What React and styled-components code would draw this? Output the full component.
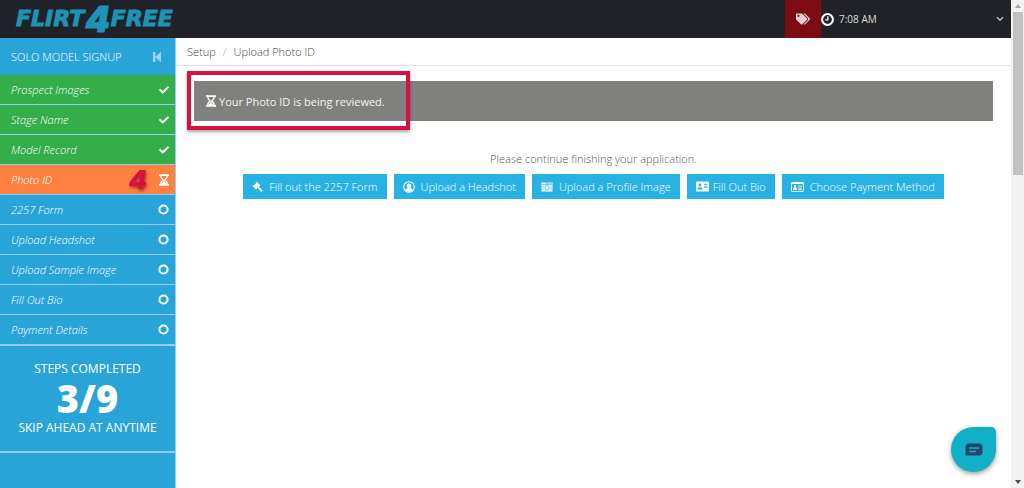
import React from "react";
import styled, { createGlobalStyle } from "styled-components";
import { FaCheck, FaTags, FaAddressCard } from "react-icons/fa";

const colors = {
  header: "#212227",
  blue: "#29a4d9",
  green: "#34ad4b",
  orange: "#ff8142",
  button: "#27b2e3",
  red: "#d8103f",
  darkRed: "#7c0c11",
  logo: "#1d93b6",
  line: "#8fd0ee",
};

const GlobalStyle = createGlobalStyle`
  * {
    box-sizing: border-box;
  }

  body {
    margin: 0;
    background: #fff;
    font-family: "Open Sans", sans-serif;
    font-size: 11px;
    color: #777;
  }

  a {
    color: inherit;
    text-decoration: none;
  }

  button {
    font: inherit;
    border: 0;
    cursor: pointer;
  }
`;

const Screen = styled.div`
  display: flex;
  height: 100vh;
  overflow: hidden;
`;

const Page = styled.div`
  flex: 1;
  min-width: 0;
  display: flex;
  flex-direction: column;
`;

const Header = styled.header`
  display: flex;
  align-items: stretch;
  justify-content: space-between;
  height: 38px;
  flex-shrink: 0;
  background: ${colors.header};
  color: #dcdcdc;
`;

const Logo = styled.a`
  display: flex;
  align-items: center;
  gap: 1px;
  padding-left: 16px;
  font-family: "DejaVu Sans", sans-serif;
  font-size: 22px;
  font-style: italic;
  font-weight: 700;
  line-height: 36px;
  -webkit-text-stroke: 1px ${colors.logo};

  && {
    color: ${colors.logo};
  }

  b {
    font-family: Inter, sans-serif;
    font-size: 35px;
    font-weight: 900;
  }
`;

const HeaderTools = styled.div`
  display: flex;
  width: 226px;
`;

const TagButton = styled.button`
  display: flex;
  align-items: center;
  justify-content: center;
  width: 36px;
  padding: 0;
  background: ${colors.darkRed};
  color: #e3cfd2;
`;

const Clock = styled.button`
  flex: 1;
  display: flex;
  align-items: center;
  gap: 5px;
  padding: 0 7px 0 0;
  background: none;
  color: #dcdcdc;
  font-size: 10px;

  svg:last-child {
    margin-left: auto;
  }
`;

const Body = styled.div`
  flex: 1;
  display: flex;
`;

const Sidebar = styled.nav`
  width: 176px;
  flex-shrink: 0;
  background: ${colors.blue};
  border-right: 1px solid ${colors.line};
  color: #fff;
`;

const SidebarTitle = styled.div`
  display: flex;
  align-items: center;
  justify-content: space-between;
  height: 37px;
  padding: 0 13px 0 11px;
  font-weight: 300;

  button {
    display: flex;
    padding: 0;
    background: none;
    color: #9bd6f0;
  }
`;

const StepList = styled.ul`
  margin: 0;
  padding: 0;
  list-style: none;
  border-bottom: 1px solid ${colors.line};
`;

const Step = styled.li`
  background: ${({ $color }) => $color};
  border-bottom: 1px solid ${colors.line};

  a {
    display: flex;
    align-items: center;
    height: 29px;
    padding: 0 6px 0 11px;
    font-style: italic;
    font-weight: 300;
  }

  svg {
    flex-shrink: 0;
  }
`;

const StepName = styled.span`
  flex: 1;
`;

const StepMark = styled.span`
  margin-right: 12px;
  font-family: Inter, sans-serif;
  font-size: 26px;
  font-weight: 900;
  font-style: italic;
  line-height: 28px;
  color: ${colors.red};
  text-shadow: 1px 2px 3px rgba(90, 20, 0, 0.6);
`;

const Progress = styled.div`
  display: flex;
  flex-direction: column;
  align-items: center;
  padding: 14px 0 15px;
  border-bottom: 2px solid ${colors.line};
  font-size: 12px;
  line-height: 17px;

  strong {
    font-size: 38px;
    font-weight: 800;
    line-height: 42px;
  }
`;

const Main = styled.main`
  flex: 1;
  min-width: 0;
`;

const Breadcrumb = styled.div`
  display: flex;
  gap: 7px;
  align-items: center;
  height: 28px;
  padding-left: 11px;
  border-bottom: 1px solid #e2e2e2;
  font-weight: 300;
  color: #444;

  span {
    color: #aaa;
  }
`;

const Content = styled.div`
  padding: 15px 18px;
`;

const Alert = styled.div`
  position: relative;
  display: flex;
  align-items: center;
  gap: 3px;
  height: 40px;
  padding-left: 12px;
  background: #80817d;
  color: #f3f3f3;
`;

const Highlight = styled.div`
  position: absolute;
  top: -10px;
  left: -7px;
  width: 223px;
  height: 59px;
  border: 4px solid ${colors.red};
  box-shadow: 0 2px 3px rgba(0, 0, 0, 0.35);
`;

const Hint = styled.p`
  margin: 29px 0 7px;
  line-height: 17px;
  text-align: center;
  font-weight: 300;
  color: #555;
`;

const Actions = styled.div`
  display: flex;
  flex-wrap: wrap;
  justify-content: center;
  gap: 7px;
`;

const ActionButton = styled.button`
  display: flex;
  align-items: center;
  gap: ${({ $tight }) => ($tight ? 4 : 6)}px;
  height: 25px;
  padding: 0 9px;
  background: ${colors.button};
  color: #fff;
  font-weight: 300;
`;

const Scrollbar = styled.div`
  display: flex;
  flex-direction: column;
  align-items: center;
  width: 13px;
  padding: 4px 0;
  background: #f1f1f1;
`;

const Thumb = styled.div`
  width: 10px;
  height: 163px;
  margin: 4px 0 auto;
  background: #c1c1c1;
`;

const ChatButton = styled.button`
  position: fixed;
  right: 28px;
  bottom: 16px;
  display: flex;
  align-items: center;
  justify-content: center;
  width: 45px;
  height: 45px;
  padding: 0;
  border-radius: 50% 5px 50% 50%;
  background: #10b0c6;
  box-shadow: 0 2px 5px rgba(0, 0, 0, 0.4);
`;

const CircleIcon = () => (
  <svg width="11" height="11" viewBox="0 0 11 11">
    <circle cx="5.5" cy="5.5" r="4.1" fill="none" stroke="#fff" strokeWidth="2" />
  </svg>
);

const HourglassIcon = () => (
  <svg width="10" height="12" viewBox="0 0 10 12" fill="none" stroke="#fff">
    <path d="M0 1.2h10M0 10.8h10" strokeWidth="1.8" />
    <path
      d="M1.8 2c0 2 1 3 2.400 4C2.800 7 1.800 8 1.800 10M8.200 2c0 2-1 3-2.400 4 1.400 1 2.400 2 2.400 4"
      strokeWidth="1.4"
    />
    <path d="M5 6.200L2.600 10h4.800z" fill="#fff" stroke="none" />
  </svg>
);

const CollapseIcon = () => (
  <svg width="9" height="12" viewBox="0 0 9 12" fill="currentColor">
    <path d="M0 1h2.500v10H0zM8 .5v11L2.500 6z" />
  </svg>
);

const ClockIcon = () => (
  <svg width="13" height="13" viewBox="0 0 12 12" fill="none" stroke="#fff">
    <circle cx="6" cy="6" r="5" strokeWidth="1.9" />
    <path d="M6.3 3v3.4H4" strokeWidth="1.2" />
  </svg>
);

const ChevronIcon = () => (
  <svg width="8" height="6" viewBox="0 0 8 6" fill="none" stroke="#c4c4c6">
    <path d="M1 1.3l3 3 3-3" strokeWidth="1.3" />
  </svg>
);

const GavelIcon = () => (
  <svg width="11" height="11" viewBox="0 0 12 12" fill="#fff">
    <path d="M5.200.6l4 4-.8.8-.5-.2-.9.900 4.800 4.100-1.800 1.800L5.900 7.200l-.8.900.2.500-.8.800-4-4 .8-.8.600.2 3-3-.3-.5z" />
  </svg>
);

const HeadshotIcon = () => (
  <svg width="12" height="12" viewBox="0 0 12 12">
    <circle cx="6" cy="6" r="5.3" fill="none" stroke="#fff" strokeWidth="1.1" />
    <circle cx="6" cy="4.8" r="2.3" fill="#fff" />
    <path d="M2.3 9.3c.4-1.6 1.4-2.3 2.3-2.4h2.8c.9.1 1.9.8 2.3 2.4L6 11z" fill="#fff" />
  </svg>
);

const CameraIcon = () => (
  <svg width="12" height="10" viewBox="0 0 12 10">
    <path d="M.5.5h11v9H.5z" fill="#fff" />
    <path d="M4.500 1.200h6.500M1 2.600h10" stroke={colors.button} strokeWidth=".7" />
    <circle cx="6" cy="5.8" r="2.2" fill="none" stroke={colors.button} strokeWidth=".8" />
    <path d="M2 4v4M10 4v4" stroke={colors.button} strokeWidth=".6" />
  </svg>
);

const CardIcon = () => (
  <svg width="13" height="10" viewBox="0 0 13 10">
    <rect x=".5" y=".5" width="12" height="9" rx=".6" fill="none" stroke="#fff" />
    <path d="M.5 1.500h12" stroke="#fff" />
    <circle cx="4" cy="4.400" r="1.200" fill="#fff" />
    <path d="M2 8c0-1.800.8-2.400 2-2.400S6 6.200 6 8z" fill="#fff" />
    <path d="M7 4h4M7 6h4M7 7.600h4" stroke="#fff" strokeWidth=".8" />
  </svg>
);

const ChatIcon = () => (
  <svg width="18" height="14" viewBox="0 0 18 14">
    <path d="M4 .5h10a3.500 3.500 0 0 1 3.500 3.500v5a3.500 3.500 0 0 1-3.500 3.500H.5V4A3.500 3.500 0 0 1 4 .5z" fill="#27466b" />
    <path d="M4 5h10M4 8.500h7" stroke="#10b0c6" strokeWidth="1.300" />
  </svg>
);

const ArrowIcon = ({ down }) => (
  <svg width="6" height="4" viewBox="0 0 6 4">
    <path d={down ? "M0 0h6L3 4z" : "M0 4h6L3 0z"} fill={down ? "#505050" : "#a3a3a3"} />
  </svg>
);

const stepTypes = {
  done: { color: colors.green, icon: <FaCheck size={10} /> },
  review: { color: colors.orange, icon: <HourglassIcon /> },
  open: { color: colors.blue, icon: <CircleIcon /> },
};

const steps = [
  { name: "Prospect Images", type: "done" },
  { name: "Stage Name", type: "done" },
  { name: "Model Record", type: "done" },
  { name: "Photo ID", type: "review", mark: "4" },
  { name: "2257 Form", type: "open" },
  { name: "Upload Headshot", type: "open" },
  { name: "Upload Sample Image", type: "open" },
  { name: "Fill Out Bio", type: "open" },
  { name: "Payment Details", type: "open" },
];

const actions = [
  { label: "Fill out the 2257 Form", icon: <GavelIcon /> },
  { label: "Upload a Headshot", icon: <HeadshotIcon /> },
  { label: "Upload a Profile Image", icon: <CameraIcon /> },
  { label: "Fill Out Bio", icon: <FaAddressCard size={13} />, tight: true },
  { label: "Choose Payment Method", icon: <CardIcon /> },
];

const App = () => {
  return (
    <Screen>
      <GlobalStyle />
      <Page>
        <Header>
          <Logo href="#">
            FLIRT<b>4</b>FREE
          </Logo>
          <HeaderTools>
            <TagButton aria-label="Offers">
              <FaTags size={14} />
            </TagButton>
            <Clock>
              <ClockIcon />
              7:08 AM
              <ChevronIcon />
            </Clock>
          </HeaderTools>
        </Header>
        <Body>
          <Sidebar>
            <SidebarTitle>
              SOLO MODEL SIGNUP
              <button aria-label="Collapse menu">
                <CollapseIcon />
              </button>
            </SidebarTitle>
            <StepList>
              {steps.map(({ name, type, mark }) => (
                <Step key={name} $color={stepTypes[type].color}>
                  <a href="#">
                    <StepName>{name}</StepName>
                    {mark && <StepMark>{mark}</StepMark>}
                    {stepTypes[type].icon}
                  </a>
                </Step>
              ))}
            </StepList>
            <Progress>
              STEPS COMPLETED
              <strong>3/9</strong>
              SKIP AHEAD AT ANYTIME
            </Progress>
          </Sidebar>
          <Main>
            <Breadcrumb>
              <a href="#">Setup</a>
              <span>/</span>
              <a href="#">Upload Photo ID</a>
            </Breadcrumb>
            <Content>
              <Alert>
                <HourglassIcon />
                Your Photo ID is being reviewed.
                <Highlight />
              </Alert>
              <Hint>Please continue finishing your application.</Hint>
              <Actions>
                {actions.map(({ label, icon, tight }) => (
                  <ActionButton key={label} $tight={tight}>
                    {icon}
                    {label}
                  </ActionButton>
                ))}
              </Actions>
            </Content>
          </Main>
        </Body>
      </Page>
      <Scrollbar>
        <ArrowIcon />
        <Thumb />
        <ArrowIcon down />
      </Scrollbar>
      <ChatButton aria-label="Open chat">
        <ChatIcon />
      </ChatButton>
    </Screen>
  );
};

export default App;
